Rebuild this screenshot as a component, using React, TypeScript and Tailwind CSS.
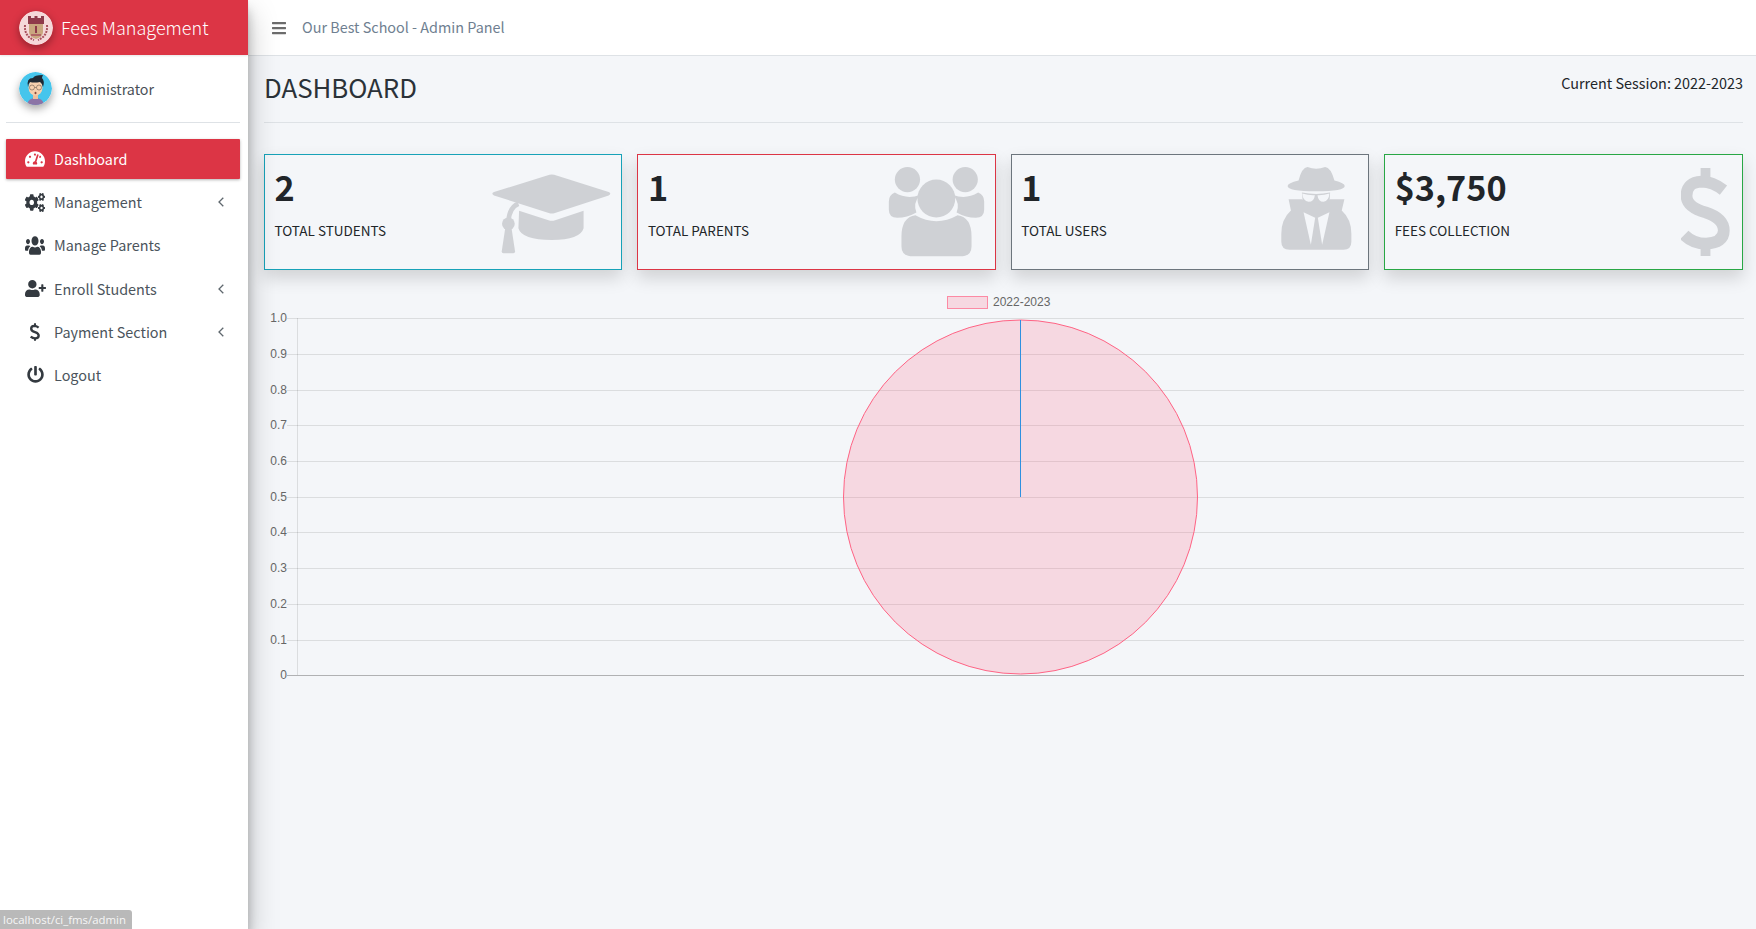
import React from "react";
import { FaTachometerAlt, FaCogs, FaUsers, FaUserPlus, FaPowerOff, FaBars } from "react-icons/fa";

function Logo() {
  return (
    <svg viewBox="0 0 34 34" className="w-[34px] h-[34px] rounded-full shadow-[0_3px_8px_rgba(0,0,0,0.35)] shrink-0">
      <circle cx="17" cy="17" r="17" fill="#f5d8d9" />
      <path d="M6 14 Q5 25 15 29 M28 14 Q29 25 19 29" stroke="#a8505c" strokeWidth="2" fill="none" strokeDasharray="2 1" />
      <rect x="9" y="7" width="16" height="6" fill="#8f3a4a" />
      <path d="M9 7v-2h3v2M15.500 7v-2h3v2M22 7v-2h3v2" fill="#8f3a4a" />
      <path d="M10 13h14v8q0 5-7 7q-7-2-7-7z" fill="#c9a77f" />
      <rect x="16" y="15" width="2" height="7" fill="#8f3a4a" />
      <path d="M12 24h10" stroke="#a8505c" strokeWidth="1.500" />
    </svg>
  );
}

function Avatar() {
  return (
    <svg viewBox="0 0 33 33" className="w-[33px] h-[33px] rounded-full shadow-[0_4px_8px_rgba(0,0,0,0.35)] shrink-0">
      <circle cx="16.500" cy="16.500" r="16.500" fill="#45c5ec" />
      <path d="M8 33q1-7 8.500-7t8.500 7z" fill="#8c74a6" />
      <rect x="14" y="20" width="5" height="7" fill="#eebf9d" />
      <ellipse cx="16.500" cy="15.500" rx="7" ry="8" fill="#f5cfae" />
      <path d="M9 15q-2-9 5-9q1-3 10-3q-1 2-1 3q3 3 1 9q-1-4-3-5q-6 1-10 0q-2 2-2 5z" fill="#1e2833" />
      <circle cx="13" cy="15.500" r="2.500" fill="none" stroke="#7c6a5c" strokeWidth="0.700" />
      <circle cx="20" cy="15.500" r="2.500" fill="none" stroke="#7c6a5c" strokeWidth="0.700" />
      <path d="M15.500 15.500h2" stroke="#7c6a5c" strokeWidth="0.700" />
      <ellipse cx="16.500" cy="21" rx="1" ry="1.300" fill="#8a4a3a" />
    </svg>
  );
}

function Arrow() {
  return (
    <svg viewBox="0 0 6 10" className="ml-auto w-[6px] h-[10px]" fill="none" stroke="#5f676e" strokeWidth="1.300">
      <path d="M5.300 0.700L1 5l4.300 4.300" />
    </svg>
  );
}

function Dollar({ className, weight, color }: { className: string; weight: number; color: string }) {
  return (
    <svg viewBox="975 318 150 274" className={className} fill="none" stroke={color} strokeWidth={weight}>
      <path d="M1105 388 Q1072 362 1038 362 Q992 364 992 405 Q992 440 1050 456 Q1106 474 1106 512 Q1106 550 1052 552 Q1012 552 985 525" />
      <path d="M1050 320 V360 M1050 552 V590" strokeWidth="30" />
    </svg>
  );
}

function NavItem({ icon, label, arrow, active }: { icon: React.ReactNode; label: string; arrow?: boolean; active?: boolean }) {
  return (
    <li
      className={
        active
          ? "flex items-center h-10 mb-[3.200px] bg-[#dc3545] text-white rounded-[1px] shadow-[0_1px_3px_rgba(0,0,0,0.3)] px-[16px]"
          : "flex items-center h-10 mb-[3.200px] text-[#4b545c] px-[16px]"
      }
    >
      <span className={active ? "w-[26px] flex justify-center text-white" : "w-[26px] flex justify-center text-[#343a40]"}>{icon}</span>
      <span className="ml-[6px] text-[14.400px] leading-6">{label}</span>
      {arrow && <Arrow />}
    </li>
  );
}

function Sidebar() {
  return (
    <aside className="w-[248px] shrink-0 bg-white relative z-10 shadow-[0_14px_28px_rgba(0,0,0,0.25),0_10px_10px_rgba(0,0,0,0.22)]">
      <div className="h-[55px] bg-[#dc3545] flex items-center pl-[19px] gap-[8px] text-white shadow-[0_1px_2px_rgba(0,0,0,0.1)]">
        <Logo />
        <span className="text-[18px] leading-[30px] font-light -translate-y-[1px]">Fees Management</span>
      </div>
      <div className="ml-[6px] mr-[8px] h-[68px] border-b border-[#dee2e6] flex items-center pl-[13px] gap-[10.500px] text-[#495057]">
        <Avatar />
        <span className="text-[14.300px] leading-6">Administrator</span>
      </div>
      <ul className="ml-[6px] mr-[8px] mt-[16px] list-none">
        <NavItem active icon={<FaTachometerAlt className="w-[20px] h-[18px]" />} label="Dashboard" />
        <NavItem arrow icon={<FaCogs preserveAspectRatio="none" className="w-[20px] h-[19px]" />} label="Management" />
        <NavItem icon={<FaUsers preserveAspectRatio="none" className="w-[20px] h-[21px]" />} label="Manage Parents" />
        <NavItem arrow icon={<FaUserPlus className="w-[21px] h-[17px]" />} label="Enroll Students" />
        <NavItem arrow icon={<Dollar className="w-[10px] h-[18px]" weight={36} color="#343a40" />} label="Payment Section" />
        <NavItem icon={<FaPowerOff className="w-[17px] h-[17px]" />} label="Logout" />
      </ul>
    </aside>
  );
}

function CapIcon() {
  return (
    <svg viewBox="720 100 365 245" className="absolute right-[9px] top-[18px] w-[122px] h-[82px]" fill="#cfd1d5">
      <path d="M898 105 Q905 103 912 105 L1075 157 Q1085 162 1075 167 L912 220 Q905 222 898 220 L732 167 Q722 162 732 157 Z" />
      <path d="M807 213 L895 241 Q905 244 915 241 L1000 213 L1000 265 Q990 300 905 300 Q815 300 805 265 Z" />
      <path d="M805 192 Q778 202 775 245" fill="none" stroke="#cfd1d5" strokeWidth="14" />
      <circle cx="775" cy="252" r="19" />
      <path d="M766 262 L784 262 L795 335 Q795 340 790 340 L760 340 Q755 340 755 335 Z" />
    </svg>
  );
}

function ParentsIcon() {
  return (
    <svg viewBox="770 75 300 280" className="absolute right-[8px] top-[10px] w-[100px] h-[93px]" fill="#cfd1d5">
      <circle cx="831" cy="119" r="38" />
      <circle cx="1005" cy="119" r="38" />
      <circle cx="918" cy="176" r="57" />
      <path d="M793 158 Q830 180 868 165 Q847 190 858 218 Q830 234 800 234 Q775 234 775 210 L775 185 Q775 165 793 158 Z" />
      <path d="M1044 158 Q1007 180 969 165 Q990 190 979 218 Q1007 234 1037 234 Q1062 234 1062 210 L1062 185 Q1062 165 1044 158 Z" />
      <path d="M855 226 Q918 262 982 226 Q1024 232 1024 290 L1024 320 Q1024 350 990 350 L848 350 Q813 350 813 320 L813 290 Q813 232 855 226 Z" />
    </svg>
  );
}

function SpyIcon() {
  return (
    <svg viewBox="840 78 218 256" className="absolute right-[15px] top-[11px] w-[73px] h-[85px]" fill="#cfd1d5">
      <path d="M895 122 Q905 82 922 81 Q948 92 975 81 Q992 82 1003 122 Q1034 130 1034 138 Q1034 154 948 154 Q862 154 862 138 Q862 130 895 122 Z" />
      <path d="M905 158 Q948 166 990 158 L988 190 Q948 218 908 190 Z" />
      <path d="M865 178 L905 178 Q948 212 990 178 L1033 178 L1025 212 Q1054 238 1054 282 L1054 306 Q1054 330 1030 330 L868 330 Q843 330 843 306 L843 282 Q843 238 872 212 Z" />
      <path d="M906 161 Q925 167 944 166 Q942 186 925 186 Q908 184 906 161 Z" fill="#f4f6f9" />
      <path d="M988 161 Q969 167 952 166 Q954 186 970 186 Q986 184 988 161 Z" fill="#f4f6f9" />
      <path d="M910 217 L945 234 L932 315 Z" fill="#f4f6f9" />
      <path d="M988 217 L953 234 L966 315 Z" fill="#f4f6f9" />
    </svg>
  );
}

function StatCard({ value, label, border, children }: { value: string; label: string; border: string; children: React.ReactNode }) {
  return (
    <div className={`relative h-[116px] border ${border} pl-[9.500px] pt-[8px] shadow-[0_8px_16px_rgba(0,0,0,0.15)]`}>
      <div className="text-[34.200px] leading-[46px] font-bold text-[#212529]">{value}</div>
      <div className="mt-[9px] text-[13.500px] leading-[24px] text-[#212529]">{label}</div>
      {children}
    </div>
  );
}

const ticks = ["1.0", "0.9", "0.8", "0.7", "0.6", "0.5", "0.4", "0.3", "0.2", "0.1", "0"];
const gridY = [317.5, 353.5, 389.5, 424.5, 460.5, 496.5, 531.5, 567.5, 603.5, 639.5, 674.5];

function Chart() {
  return (
    <svg viewBox="264 285 1480 400" className="block w-[1480px] h-[400px] mt-[16px]">
      <line x1="297.500" y1="317" x2="297.500" y2="674" stroke="rgba(0,0,0,0.1)" />
      {gridY.map((y, i) => (
        <line key={y} x1="287" y1={y} x2="1744" y2={y} stroke={i === 10 ? "rgba(0,0,0,0.28)" : "rgba(0,0,0,0.1)"} />
      ))}
      {ticks.map((t, i) => (
        <text key={t} x="287" y={gridY[i]} textAnchor="end" dominantBaseline="middle" fontSize="12" fontFamily="'Liberation Sans', sans-serif" fill="#666">
          {t}
        </text>
      ))}
      <circle cx="1020.500" cy="496" r="177" fill="rgba(255,99,132,0.2)" stroke="#ff6384" />
      <line x1="1020.500" y1="319" x2="1020.500" y2="496" stroke="#2e90e0" />
      <rect x="947.500" y="295.500" width="40" height="12" fill="rgba(255,99,132,0.2)" stroke="#ff6384" strokeOpacity="0.7" />
      <text x="993" y="301.500" dominantBaseline="middle" fontSize="12" fontFamily="'Liberation Sans', sans-serif" fill="#666">
        2022-2023
      </text>
    </svg>
  );
}

export default function App() {
  return (
    <div className="flex h-screen w-full overflow-hidden bg-[#f4f6f9] font-['Noto_Sans_CJK_SC','Noto_Sans',sans-serif]">
      <Sidebar />
      <div className="flex-1 min-w-0">
        <header className="h-[56px] bg-white border-b border-[#dee2e6] flex items-center pl-[23px]">
          <FaBars className="text-[16px] text-[#6c6c6c]" />
          <span className="ml-[15px] text-[14.400px] leading-6 text-[#6f7f91] -translate-y-[1px]">Our Best School - Admin Panel</span>
        </header>
        <main className="pl-[16px] pr-[13px]">
          <div className="h-[67px] border-b border-[#dee2e6] flex justify-between">
            <h1 className="text-[25.800px] leading-[34px] font-normal text-[#2b3238] mt-[14px]">DASHBOARD</h1>
            <span className="text-[14.400px] leading-6 text-[#212529] mt-[15px]">Current Session: 2022-2023</span>
          </div>
          <div className="grid grid-cols-[repeat(4,358.400px)] gap-[15px] mt-[31px]">
            <StatCard value="2" label="TOTAL STUDENTS" border="border-[#17a2b8]">
              <CapIcon />
            </StatCard>
            <StatCard value="1" label="TOTAL PARENTS" border="border-[#dc3545]">
              <ParentsIcon />
            </StatCard>
            <StatCard value="1" label="TOTAL USERS" border="border-[#6c757d]">
              <SpyIcon />
            </StatCard>
            <StatCard value="$3,750" label="FEES COLLECTION" border="border-[#28a745]">
              <Dollar className="absolute right-[12px] top-[12px] w-[49px] h-[90px]" weight={36} color="#cfd1d5" />
            </StatCard>
          </div>
          <Chart />
        </main>
      </div>
      <div className="fixed left-0 bottom-0 z-20 h-[19px] w-[132px] bg-[#b9b9b9] rounded-tr-[3px] pl-[3px] text-[11.400px] leading-[19px] whitespace-nowrap text-[#f6f6f6] font-['Open_Sans',sans-serif]">
        localhost/ci_fms/admin
      </div>
    </div>
  );
}
